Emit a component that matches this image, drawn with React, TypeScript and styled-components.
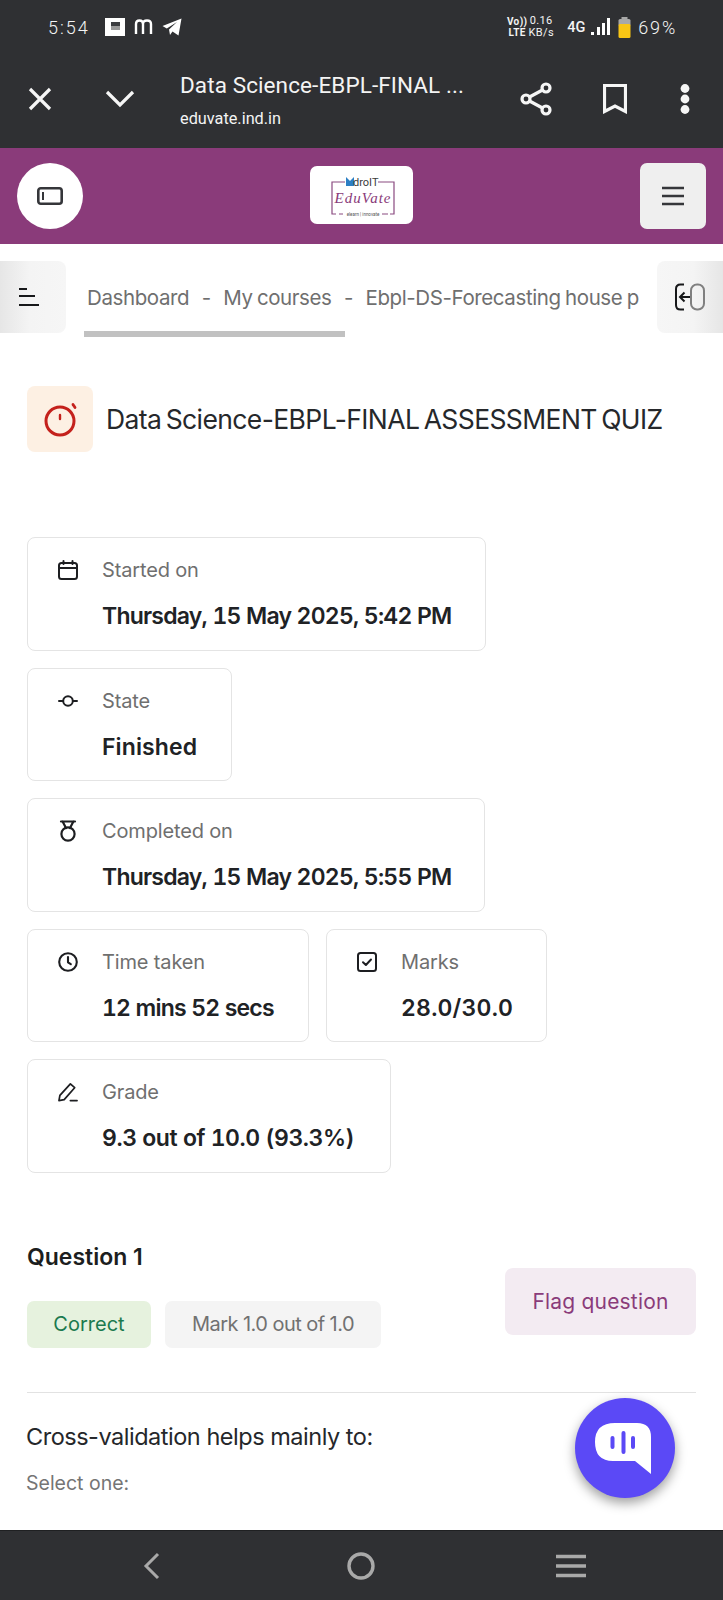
import React from "react";
import styled, { createGlobalStyle } from "styled-components";

const Global = createGlobalStyle`
  * { box-sizing: border-box; }
  html, body { margin: 0; padding: 0; background: #fff; }
  body { font-family: Inter, "Noto Sans", sans-serif; }
`;

const Page = styled.div`
  position: relative;
  width: 723px;
  height: 1600px;
  overflow: hidden;
  display: flex;
  flex-direction: column;
  background: #fff;
`;

const Chrome = styled.header`
  height: 148px;
  flex: none;
  background: #2f3033;
  color: #f4f4f4;
  font-family: Roboto, sans-serif;
`;

const StatusBar = styled.div`
  height: 54px;
  padding: 0 46px 0 48px;
  display: flex;
  align-items: center;
  justify-content: space-between;
`;

const StatusGroup = styled.div`
  display: flex;
  align-items: center;
`;

const Clock = styled.span`
  font-size: 18px;
  font-weight: 300;
  letter-spacing: 2px;
  width: 57px;
`;

const NoteIcon = styled.span`
  width: 20px;
  height: 18px;
  background: #fff;
  display: flex;
  align-items: flex-start;
  justify-content: center;
  padding-top: 4px;
  margin-right: 8px;
`;

const NoteInk = styled.span`
  width: 9px;
  height: 8px;
  background: linear-gradient(#3c3d40 0 55%, #9a9a9a 55% 100%);
`;

const TinyStack = styled.span<{ $w: number; $size: number; $weight: number }>`
  width: ${(p) => p.$w}px;
  display: flex;
  flex-direction: column;
  align-items: center;
  font-size: ${(p) => p.$size}px;
  line-height: ${(p) => p.$size + 1}px;
  font-weight: ${(p) => p.$weight};
  letter-spacing: 0.4px;
`;

const NetLabel = styled.span`
  font-size: 14.5px;
  font-weight: 500;
  margin-left: 10px;
  margin-right: 5px;
`;

const Percent = styled.span`
  font-size: 18px;
  font-weight: 300;
  letter-spacing: 1.8px;
  margin-left: 7px;
`;

const Toolbar = styled.div`
  height: 94px;
  display: flex;
  align-items: flex-start;
`;

const ToolButton = styled.span<{ $w: number; $ml?: number }>`
  width: ${(p) => p.$w}px;
  margin-left: ${(p) => p.$ml ?? 0}px;
  height: 90px;
  flex: none;
  display: flex;
  align-items: center;
  justify-content: center;
`;

const PageInfo = styled.div`
  width: 322px;
  margin-left: 40px;
  padding-top: 16px;
  flex: none;
`;

const PageTitle = styled.div`
  font-size: 22.5px;
  line-height: 30px;
  letter-spacing: 0.1px;
  white-space: nowrap;
`;

const PageUrl = styled.div`
  font-size: 16.3px;
  line-height: 20px;
  margin-top: 9px;
`;

const BrandBar = styled.div`
  height: 96px;
  flex: none;
  background: #8a3b7a;
  padding: 15px 17px 0;
  display: flex;
  align-items: flex-start;
  justify-content: space-between;
`;

const RoundButton = styled.button`
  width: 66px;
  height: 66px;
  padding: 0;
  border: 0;
  border-radius: 50%;
  background: #fff;
  display: flex;
  align-items: center;
  justify-content: center;
`;

const LogoCard = styled.div`
  width: 103px;
  height: 58px;
  margin-top: 3px;
  background: #fff;
  border-radius: 7px;
`;

const MenuButton = styled.button`
  width: 66px;
  height: 66px;
  padding: 0;
  border: 0;
  border-radius: 7px;
  background: #efefef;
  display: flex;
  align-items: center;
  justify-content: center;
`;

const Crumbs = styled.nav`
  height: 76px;
  margin-top: 17px;
  flex: none;
  display: flex;
  align-items: flex-start;
`;

const EdgeButton = styled.span<{ $side: "left" | "right" }>`
  width: 66px;
  height: 72px;
  flex: none;
  margin-left: ${(p) => (p.$side === "right" ? "auto" : "0")};
  display: flex;
  align-items: center;
  justify-content: center;
  background: linear-gradient(
    ${(p) => (p.$side === "left" ? "to right" : "to left")},
    #e6e6e6 0%,
    #f4f4f4 45%,
    #f6f6f6 100%
  );
  border-radius: ${(p) => (p.$side === "left" ? "0 8px 8px 0" : "8px 0 0 8px")};
`;

const CrumbTrack = styled.div`
  width: 555px;
  margin-left: 18px;
  flex: none;
  overflow: hidden;
  position: relative;
  height: 76px;
`;

const CrumbText = styled.div`
  height: 72px;
  display: flex;
  align-items: center;
  white-space: nowrap;
  font-size: 20.5px;
  letter-spacing: -0.4px;
  word-spacing: -1px;
  color: #6f6f6f;
  padding-left: 3px;
`;

const CrumbDash = styled.span`
  margin: 0 12.5px;
`;

const CrumbScroll = styled.div`
  width: 261px;
  height: 6px;
  background: #c1c1c1;
  position: absolute;
  left: 0;
  top: 70px;
`;

const Main = styled.main`
  flex: 1;
  min-height: 0;
  overflow: hidden;
  padding: 49px 27px 0;
`;

const TitleRow = styled.div`
  display: flex;
  align-items: center;
  height: 66px;
`;

const TitleIcon = styled.span`
  width: 66px;
  height: 66px;
  flex: none;
  border-radius: 8px;
  background: #fdf0e3;
  display: flex;
  align-items: center;
  justify-content: center;
`;

const Title = styled.h1`
  margin: 0 0 0 13px;
  font-size: 26.5px;
  font-weight: 400;
  color: #26282b;
  letter-spacing: -0.6px;
  word-spacing: -2.5px;
  white-space: nowrap;
`;

const Cards = styled.div`
  margin-top: 85px;
  display: flex;
  flex-direction: column;
  gap: 17px;
`;

const CardRow = styled.div`
  display: flex;
  gap: 17px;
`;

const Card = styled.section<{ $w: number }>`
  width: ${(p) => p.$w}px;
  height: 113.5px;
  border: 1.5px solid #e4e4e4;
  border-radius: 8px;
  padding: 20px 0 0 30px;
  display: grid;
  grid-template-columns: 20px 1fr;
  column-gap: 24px;
`;

const CardIcon = styled.span`
  height: 24px;
  display: flex;
  align-items: center;
`;

const CardLabel = styled.div`
  font-size: 20px;
  line-height: 24px;
  letter-spacing: -0.15px;
  color: #6f6f6f;
`;

const CardValue = styled.div<{ $track: number }>`
  font-size: 23px;
  line-height: 30px;
  margin-top: 19px;
  font-weight: 600;
  font-variant-numeric: tabular-nums;
  letter-spacing: ${(p) => p.$track}px;
  color: #202225;
  white-space: nowrap;
`;

const QuestionHead = styled.div`
  margin-top: 69px;
  display: flex;
  justify-content: space-between;
  align-items: flex-start;
`;

const QuestionName = styled.h2`
  margin: 0;
  font-size: 23px;
  line-height: 30px;
  font-weight: 600;
  letter-spacing: 0;
  color: #1c1e20;
`;

const Badges = styled.div`
  margin-top: 29px;
  display: flex;
  gap: 14px;
`;

const Badge = styled.span<{ $bg: string; $fg: string; $w: number; $track: number }>`
  width: ${(p) => p.$w}px;
  height: 47px;
  border-radius: 7px;
  background: ${(p) => p.$bg};
  color: ${(p) => p.$fg};
  font-size: 20px;
  letter-spacing: ${(p) => p.$track}px;
  display: flex;
  align-items: center;
  justify-content: center;
`;

const FlagButton = styled.button`
  width: 191px;
  height: 67px;
  margin-top: 26px;
  border: 0;
  border-radius: 8px;
  background: #f3ebf2;
  color: #8a3b7a;
  font-family: inherit;
  font-size: 21px;
  letter-spacing: 0.2px;
`;

const Rule = styled.hr`
  margin: 44px 0 0;
  border: 0;
  border-top: 1.5px solid #e2e2e2;
`;

const QuestionText = styled.p`
  margin: 28px 0 0 -1px;
  font-size: 23.5px;
  line-height: 32px;
  letter-spacing: -0.48px;
  color: #25272a;
`;

const SelectOne = styled.p`
  margin: 17px 0 0 -1px;
  font-size: 19.5px;
  line-height: 26px;
  letter-spacing: 0;
  color: #757575;
`;

const NavBar = styled.footer`
  height: 70px;
  flex: none;
  background: #2f3033;
  border-top: 1px solid #1f2022;
  display: flex;
  align-items: center;
  justify-content: space-around;
  padding: 0 47px;
`;

const NavSlot = styled.span`
  width: 70px;
  display: flex;
  justify-content: center;
`;

const Fab = styled.button`
  position: absolute;
  left: 575px;
  top: 1398px;
  width: 100px;
  height: 100px;
  padding: 0;
  border: 0;
  border-radius: 50%;
  background: #5b49f6;
  box-shadow: 0 5px 12px rgba(0, 0, 0, 0.38);
  display: block;
`;

const Line = { fill: "none", stroke: "currentColor", strokeLinecap: "round", strokeLinejoin: "round" } as const;

const Ink = styled.svg`
  display: block;
  color: #1d1e21;
`;

const cardIcons: Record<string, React.ReactNode> = {
  calendar: (
    <Ink width="20" height="20" viewBox="0 0 20 20">
      <g {...Line} strokeWidth="2">
        <rect x="1" y="3" width="18" height="16" rx="2.5" />
        <path d="M1 8h18M5.500 1v3M14.500 1v3" />
      </g>
    </Ink>
  ),
  state: (
    <Ink width="20" height="20" viewBox="0 0 20 20">
      <g {...Line} strokeWidth="2">
        <circle cx="10" cy="10" r="4.8" />
        <path d="M1 10h4M15 10h4" />
      </g>
    </Ink>
  ),
  medal: (
    <Ink width="20" height="22" viewBox="0 0 20 22">
      <g {...Line} strokeWidth="2.2">
        <circle cx="10" cy="14" r="6.600" />
        <path d="M3 1.500h14M4.600 1.500 8 8M15.400 1.500 12 8" />
      </g>
    </Ink>
  ),
  clock: (
    <Ink width="20" height="20" viewBox="0 0 20 20">
      <g {...Line} strokeWidth="2.100">
        <circle cx="10" cy="10" r="8.800" />
        <path d="M10 5v5.300l2.800 1.800" />
      </g>
    </Ink>
  ),
  check: (
    <Ink width="20" height="20" viewBox="0 0 20 20">
      <g {...Line} strokeWidth="2">
        <rect x="1" y="1" width="18" height="18" rx="2.500" />
        <path d="M6 10.200l2.900 2.800L14 7.500" />
      </g>
    </Ink>
  ),
  pencil: (
    <Ink width="21" height="20" viewBox="0 0 21 20">
      <g {...Line} strokeWidth="1.800">
        <path d="M1 19 2 13.500 13 1.500 17.500 5.500 6.500 18Z" />
        <path d="M13 19h7" />
      </g>
    </Ink>
  ),
};

const details = [
  [{ icon: "calendar", label: "Started on", value: "Thursday, 15 May 2025, 5:42 PM", w: 459, track: -0.78 }],
  [{ icon: "state", label: "State", value: "Finished", w: 205, track: 0.1 }],
  [{ icon: "medal", label: "Completed on", value: "Thursday, 15 May 2025, 5:55 PM", w: 458, track: -0.78 }],
  [
    { icon: "clock", label: "Time taken", value: "12 mins 52 secs", w: 282, track: -0.8 },
    { icon: "check", label: "Marks", value: "28.0/30.0", w: 221, track: 0.2 },
  ],
  [{ icon: "pencil", label: "Grade", value: "9.3 out of 10.0 (93.3%)", w: 364, track: -0.45 }],
];

export default function App() {
  return (
    <Page>
      <Global />
      <Chrome>
        <StatusBar>
          <StatusGroup>
            <Clock>5:54</Clock>
            <NoteIcon>
              <NoteInk />
            </NoteIcon>
            <svg width="22" height="18" viewBox="0 0 22 18" style={{ marginRight: 7 }}>
              <path d="M2 17V7q0-3.500 3.500-3.500T9 7v10M9 7q0-3.500 4-3.500T17 7v10" fill="none" stroke="#fff" strokeWidth="2.400" transform="translate(1 -1)" />
            </svg>
            <svg width="20" height="20" viewBox="0 0 20 20">
              <path d="M0.500 9 19.500 1.500 16.500 18.500 10.500 14.500 8 18 7 12.500 15 5 4.800 11.500Z" fill="#fff" />
            </svg>
          </StatusGroup>
          <StatusGroup>
            <TinyStack $w={16} $size={10} $weight={700}>
              <span>Vo))</span>
              <span>LTE</span>
            </TinyStack>
            <TinyStack $w={32} $size={11} $weight={400}>
              <span>0.16</span>
              <span>KB/s</span>
            </TinyStack>
            <NetLabel>4G</NetLabel>
            <svg width="20" height="20" viewBox="0 0 20 20">
              <path d="M1 15h3v3H1zM7 10h3v8H7zM12 6h3v12h-3zM17 1h3v17h-3z" fill="#fff" />
            </svg>
            <svg width="13" height="21" viewBox="0 0 13 21" style={{ marginLeft: 8 }}>
              <rect x="3.500" y="0" width="6" height="3" fill="#a8a8a8" />
              <rect x="0.500" y="2" width="12" height="7" rx="1.500" fill="#a8a8a8" />
              <rect x="0.500" y="7" width="12" height="14" rx="1.500" fill="#f9c515" />
            </svg>
            <Percent>69%</Percent>
          </StatusGroup>
        </StatusBar>
        <Toolbar>
          <ToolButton $w={40} $ml={20}>
            <svg width="24" height="24" viewBox="0 0 24 24">
              <path d="M2 2l20 20M22 2 2 22" stroke="#f6f6f6" strokeWidth="3.200" fill="none" />
            </svg>
          </ToolButton>
          <ToolButton $w={40} $ml={40}>
            <svg width="30" height="18" viewBox="0 0 30 18">
              <path d="M2 2l13 13L28 2" stroke="#f6f6f6" strokeWidth="3.200" fill="none" />
            </svg>
          </ToolButton>
          <PageInfo>
            <PageTitle>Data Science-EBPL-FINAL ...</PageTitle>
            <PageUrl>eduvate.ind.in</PageUrl>
          </PageInfo>
          <ToolButton $w={40} $ml={14}>
            <svg width="32" height="34" viewBox="0 0 32 34">
              <g fill="none" stroke="#f6f6f6" strokeWidth="3.200">
                <circle cx="26" cy="6" r="4" />
                <circle cx="6" cy="17" r="4" />
                <circle cx="26" cy="28" r="4" />
                <path d="M9.500 15 22.500 8M9.500 19l13 7" />
              </g>
            </svg>
          </ToolButton>
          <ToolButton $w={40} $ml={39}>
            <svg width="24" height="30" viewBox="0 0 24 30">
              <path d="M1.500 1.500h21v26L12 22 1.500 27.500Z" fill="none" stroke="#f6f6f6" strokeWidth="3.200" />
            </svg>
          </ToolButton>
          <ToolButton $w={40} $ml={30}>
            <svg width="10" height="30" viewBox="0 0 10 30">
              <circle cx="5" cy="4.500" r="4.400" fill="#f6f6f6" />
              <circle cx="5" cy="15" r="4.400" fill="#f6f6f6" />
              <circle cx="5" cy="25.500" r="4.400" fill="#f6f6f6" />
            </svg>
          </ToolButton>
        </Toolbar>
      </Chrome>

      <BrandBar>
        <RoundButton>
          <svg width="26" height="18" viewBox="0 0 26 18">
            <rect x="1.300" y="1.300" width="23.400" height="15.400" rx="2.500" fill="none" stroke="#35363a" strokeWidth="2.600" />
            <path d="M6 5v8" stroke="#35363a" strokeWidth="2" />
          </svg>
        </RoundButton>
        <LogoCard>
          <svg width="103" height="58" viewBox="0 0 103 58">
            <path d="M35 16H22v32h4M68 16h16v32h-4M33 48h-4M78 48h-6" fill="none" stroke="#8a4a80" strokeWidth="1.200" />
            <path d="M36 11l4 4 4-4v9h-8z" fill="#2c7fc4" />
            <text x="43" y="20" fontFamily="Roboto, sans-serif" fontSize="11" fill="#3b3b3b">droIT</text>
            <text x="53" y="37" textAnchor="middle" fontFamily="'Liberation Serif', serif" fontStyle="italic" fontSize="15" letterSpacing="1" fill="#8a3b7a">EduVate</text>
            <text x="53" y="49.500" textAnchor="middle" fontFamily="Roboto, sans-serif" fontSize="4.500" fill="#555">elearn | innovate</text>
          </svg>
        </LogoCard>
        <MenuButton>
          <svg width="22" height="20" viewBox="0 0 22 20">
            <path d="M0 2h22M0 10h22M0 18h22" stroke="#35363a" strokeWidth="2.600" />
          </svg>
        </MenuButton>
      </BrandBar>

      <Crumbs>
        <EdgeButton $side="left">
          <svg width="24" height="20" viewBox="0 0 24 20" style={{ marginLeft: -8 }}>
            <path d="M2 2h8M2 9h16M2 18h20" stroke="#17181a" strokeWidth="2" />
          </svg>
        </EdgeButton>
        <CrumbTrack>
          <CrumbText>
            Dashboard<CrumbDash>-</CrumbDash>My courses<CrumbDash>-</CrumbDash>Ebpl-DS-Forecasting house price
          </CrumbText>
          <CrumbScroll />
        </CrumbTrack>
        <EdgeButton $side="right">
          <svg width="32" height="28" viewBox="0 0 32 28">
            <path d="M10 1.500H6.500Q2 1.500 2 6v16q0 4.500 4.500 4.500H10" fill="none" stroke="#17181a" strokeWidth="2" />
            <path d="M16 14H6.500M10.500 9.500 6 14l4.500 4.500" fill="none" stroke="#17181a" strokeWidth="2" />
            <rect x="17" y="1.500" width="13" height="25" rx="6" fill="none" stroke="#808080" strokeWidth="2" />
          </svg>
        </EdgeButton>
      </Crumbs>

      <Main>
        <TitleRow>
          <TitleIcon>
            <svg width="36" height="36" viewBox="0 0 36 36">
              <g fill="none" stroke="#c4211c" strokeLinecap="round">
                <circle cx="18" cy="20" r="14" strokeWidth="3" />
                <path d="M18 14v4" strokeWidth="2.400" />
                <path d="M31 3.500l2 3" strokeWidth="2.800" />
              </g>
            </svg>
          </TitleIcon>
          <Title>Data Science-EBPL-FINAL ASSESSMENT QUIZ</Title>
        </TitleRow>

        <Cards>
          {details.map((row, i) => (
            <CardRow key={i}>
              {row.map((d) => (
                <Card key={d.label} $w={d.w}>
                  <CardIcon>{cardIcons[d.icon]}</CardIcon>
                  <div>
                    <CardLabel>{d.label}</CardLabel>
                    <CardValue $track={d.track}>{d.value}</CardValue>
                  </div>
                </Card>
              ))}
            </CardRow>
          ))}
        </Cards>

        <QuestionHead>
          <div>
            <QuestionName>Question 1</QuestionName>
            <Badges>
              <Badge $bg="#e6f2de" $fg="#1b7a4e" $w={124} $track={0}>Correct</Badge>
              <Badge $bg="#f4f4f4" $fg="#717171" $w={216} $track={-0.55}>Mark 1.0 out of 1.0</Badge>
            </Badges>
          </div>
          <FlagButton>Flag question</FlagButton>
        </QuestionHead>
        <Rule />
        <QuestionText>Cross-validation helps mainly to:</QuestionText>
        <SelectOne>Select one:</SelectOne>
      </Main>

      <NavBar>
        <NavSlot>
          <svg width="18" height="28" viewBox="0 0 18 28">
            <path d="M15 2 3 14l12 12" fill="none" stroke="#a9a9a9" strokeWidth="3" />
          </svg>
        </NavSlot>
        <NavSlot>
          <svg width="28" height="28" viewBox="0 0 28 28">
            <circle cx="14" cy="14" r="12" fill="none" stroke="#a9a9a9" strokeWidth="3.400" />
          </svg>
        </NavSlot>
        <NavSlot>
          <svg width="30" height="24" viewBox="0 0 30 24">
            <path d="M0 2.500h30M0 12h30M0 21.500h30" stroke="#a9a9a9" strokeWidth="3.400" />
          </svg>
        </NavSlot>
      </NavBar>

      <Fab aria-label="Chat">
        <svg width="100" height="100" viewBox="0 0 100 100">
          <path d="M40 25H62Q76 25 76 39V76L60 63H38Q20 63 20 44Q20 25 40 25Z" fill="#fff" />
          <path d="M37.500 40v9M48.500 35v19M58 40v9" stroke="#5b49f6" strokeWidth="4" strokeLinecap="round" />
        </svg>
      </Fab>
    </Page>
  );
}
